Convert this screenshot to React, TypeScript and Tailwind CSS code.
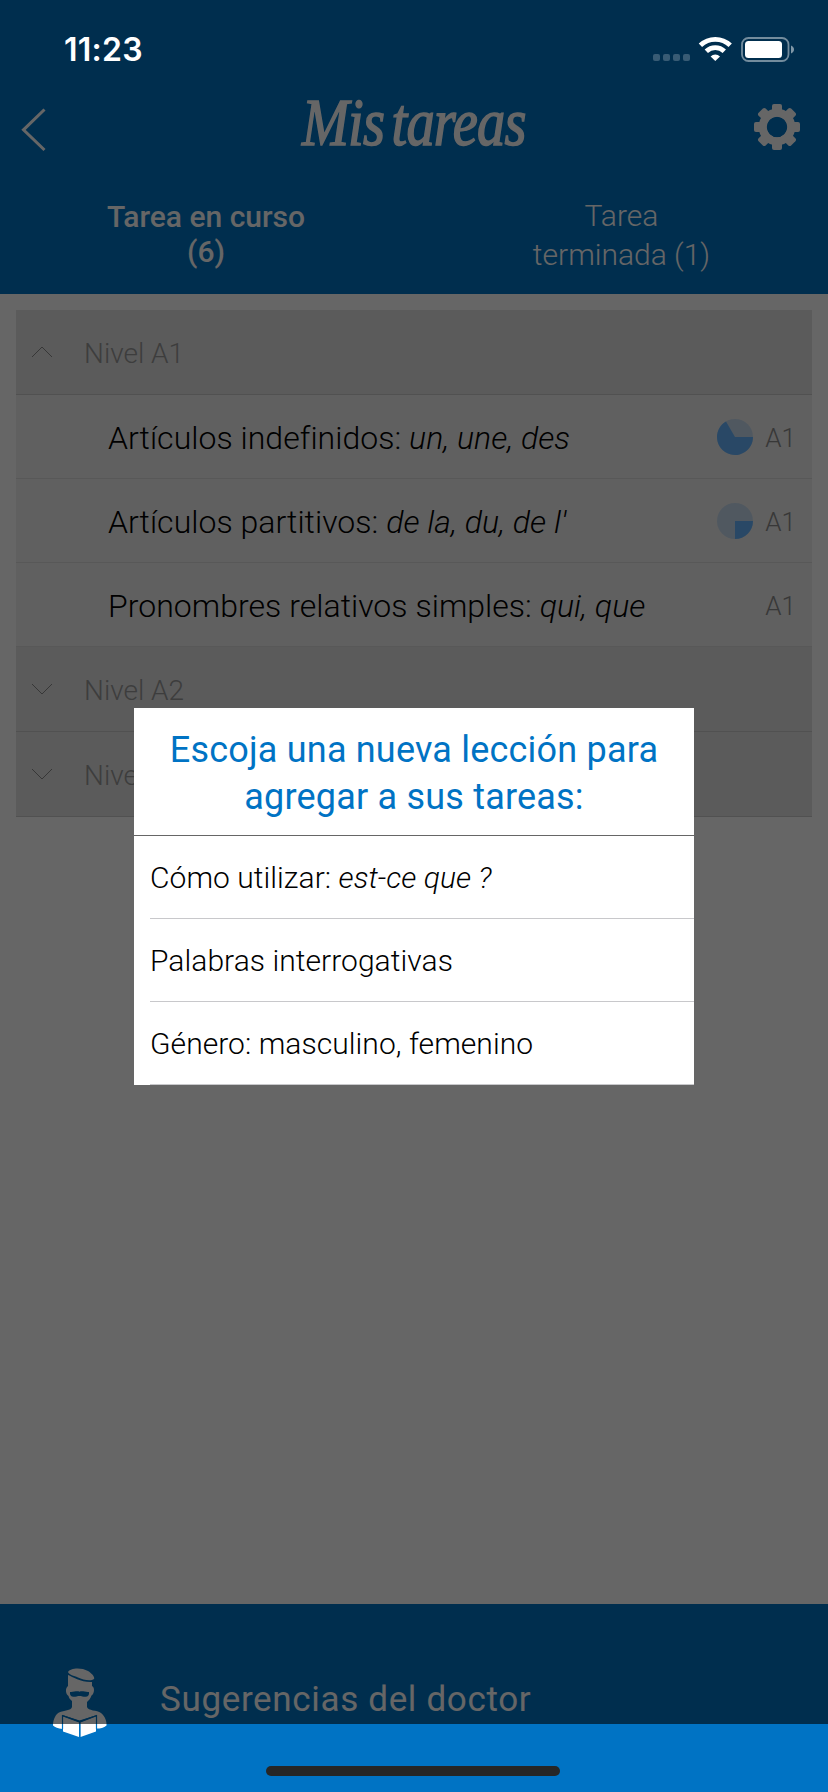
import type { ReactNode } from "react";

function StatusBar() {
  return (
    <div className="relative z-20 flex h-[88px] items-start justify-between pl-[64px] pr-[34px] pt-[30px] text-white">
      <span className="font-['Inter',sans-serif] text-[32px] font-semibold leading-[40px] tracking-[0.25px]">11:23</span>
      <svg width="142" height="32" viewBox="0 0 142 32" className="mt-[3px]" fill="none">
        <g fill="#fff" fillOpacity="0.22">
          <rect x="1" y="21" width="7" height="7" rx="2" />
          <rect x="11" y="21" width="7" height="7" rx="2" />
          <rect x="21" y="21" width="7" height="7" rx="2" />
          <rect x="31" y="21" width="7" height="7" rx="2" />
        </g>
        <g stroke="#fff" strokeWidth="4.8">
          <path d="M48.4 12.3 A 21.5 21.5 0 0 1 78.2 12.3" />
          <path d="M54.3 18.2 A 13 13 0 0 1 72.3 18.2" />
        </g>
        <path d="M63.3 28 L58.6 23.4 A 6.8 6.8 0 0 1 68 23.4 Z" fill="#fff" />
        <rect x="90" y="5" width="46.5" height="23" rx="6.5" stroke="#fff" strokeOpacity="0.45" strokeWidth="1.8" />
        <rect x="93" y="8" width="37" height="17" rx="3.5" fill="#fff" />
        <path d="M139 12.5 C143 14 143 19 139 20.500 Z" fill="#fff" fillOpacity="0.5" />
      </svg>
    </div>
  );
}

function Gear() {
  return (
    <svg width="48" height="48" viewBox="-24 -24 48 48" fill="#fff">
      {[0, 45, 90, 135].map((a) => (
        <rect key={a} x="-5" y="-23" width="10" height="46" rx="2" transform={`rotate(${a})`} mask="url(#hole)" />
      ))}
      <circle r="14.300" fill="none" stroke="#fff" strokeWidth="8" />
      <mask id="hole" maskUnits="userSpaceOnUse" x="-24" y="-24" width="48" height="48">
        <rect x="-24" y="-24" width="48" height="48" fill="#fff" />
        <circle r="10.500" fill="#000" />
      </mask>
    </svg>
  );
}

function Chevron({ up }: { up?: boolean }) {
  return (
    <svg width="22" height="12" viewBox="0 0 22 12" fill="none" stroke="#8a8a8a" strokeWidth="1">
      <path d={up ? "M1 11 L11 1 L21 11" : "M1 1 L11 11 L21 1"} />
    </svg>
  );
}

function LevelHeader({ label, up }: { label: string; up?: boolean }) {
  return (
    <div className="flex h-[85px] items-center border-b border-[#cbcbcb] bg-[#e4e4e4] pl-[15px]">
      <Chevron up={up} />
      <span className="ml-[31px] pt-[3px] text-[28px] font-light leading-[34px] text-[#999]">{label}</span>
    </div>
  );
}

function Lesson({ children, pie }: { children: ReactNode; pie?: string }) {
  return (
    <div className="flex h-[84px] items-center border-b border-[#dcdcdc] bg-[#f0f0f0] pl-[92px] pr-[16px]">
      <span className="flex-1 pt-[2px] text-[32px] font-light leading-[38px] tracking-[0.03px] text-black">{children}</span>
      {pie && (
        <svg width="36" height="36" viewBox="-18 -18 36 36">
          <circle r="18" fill="#c8dcf0" />
          <path d={pie} fill="#66b5ff" />
        </svg>
      )}
      <span className="ml-[12px] pt-[2px] text-[26px] font-light leading-[30px] text-[#8c8c8c]">A1</span>
    </div>
  );
}

function Doctor() {
  return (
    <svg width="56" height="70" viewBox="0 0 56 70" fill="#fff">
      <path d="M16 4 C18 0 29 -1 36 3 C40 5.500 43 9 42 11 C39 13.500 31 12 26 9.500 C22 7.500 17 7 16 4 Z" />
      <path d="M16 7 C21 9 29 14.500 40 14 L40 18 C43 19 42.500 26 39.500 27.500 C38.500 31 36 33 35 34 L35 39 C36 43 45 42 49 45 C53 48 55 54 54.500 57.500 C52 60 48 60.500 45 60.500 L45 47 L27.500 52.500 L10.500 47 L10.500 61 C6 60.500 3 59.500 1 57.500 C1 51 4 46 7 44.500 C12 42 19 43 20 39 L20 33 C18 31.500 17 30 16.500 28 C13.500 26 13 20 16 18 Z" />
      <path d="M11 48.500 L27 54.500 L27 69 L11 63.500 Z M44 48.500 L28.500 54.500 L28.500 69 L44 63.500 Z" />
      <path d="M10.500 61 L10.500 47.500 L27.700 53.500 L44.500 47.500 L44.500 61 M27.700 53.500 L27.700 69" fill="none" stroke="#0073c4" strokeWidth="1.200" />
      <path d="M18 24 C21 24.500 25 22.500 27.500 23.800 C30 22.500 34 24.500 37 24 C37.500 27 36 28.800 33.500 28.800 C31 28.800 29.500 28 27.500 28 C25.500 28 24 28.800 21.500 28.800 C19 28.800 17.500 27 18 24 Z" fill="#0073c4" />
    </svg>
  );
}

function Option({ children }: { children: ReactNode }) {
  return (
    <div className="pl-4">
      <div className="flex h-[83px] items-center border-b border-[#c8c8cb] pt-[2px] text-[30px] font-light leading-[36px] tracking-[0.05px] text-black">
        <span>{children}</span>
      </div>
    </div>
  );
}

export default function App() {
  return (
    <div className="relative flex h-[1792px] w-[828px] flex-col overflow-hidden bg-white font-['Roboto',sans-serif]">
      <header className="h-[294px] bg-[#0073c4] text-white">
        <StatusBar />
        <div className="flex h-[90px] items-start pl-[21px] pr-[27px]">
          <div className="w-[54px] pt-[20px]">
            <svg width="25" height="44" viewBox="0 0 25 44" fill="none" stroke="#fff" strokeWidth="3">
              <path d="M23.500 1.500 L2.500 21.800 L23.500 42" />
            </svg>
          </div>
          <div className="flex flex-1 justify-center">
            <h1 className="origin-center scale-x-[0.83] whitespace-nowrap font-['Liberation_Serif',serif] text-[68px] font-normal italic leading-[68px] tracking-[-1px] [word-spacing:-7px] [-webkit-text-stroke:1.5px_#fff]">
              Mis tareas
            </h1>
          </div>
          <div className="pt-[15px]">
            <Gear />
          </div>
        </div>
        <div className="flex text-center text-[30px]">
          <div className="w-[412px] pt-[21px] font-medium leading-[35px]">
            Tarea en curso
            <br />
            (6)
          </div>
          <div className="w-[416px] pl-[3px] pt-[18px] font-light leading-[39px]">
            Tarea
            <br />
            terminada (1)
          </div>
        </div>
      </header>

      <main className="flex-1 px-4 pt-4">
        <LevelHeader label="Nivel A1" up />
        <Lesson pie="M0 0 L18 0 A18 18 0 1 1 -9 -15.600 Z">
          Artículos indefinidos: <em>un, une, des</em>
        </Lesson>
        <Lesson pie="M0 0 L18 0 A18 18 0 0 1 0 18 Z">
          Artículos partitivos: <em>de la, du, de l'</em>
        </Lesson>
        <Lesson>
          Pronombres relativos simples: <em>qui, que</em>
        </Lesson>
        <LevelHeader label="Nivel A2" />
        <LevelHeader label="Nive" />
      </main>

      <footer className="flex h-[188px] items-start bg-[#0073c4] pl-[52px] text-white">
        <div className="mt-[64px]">
          <Doctor />
        </div>
        <span className="ml-[52px] mt-[75px] text-[35px] leading-[42px] tracking-[0.66px]">Sugerencias del doctor</span>
      </footer>

      <div className="absolute inset-x-0 top-0 z-10 h-[1724px] bg-black/60" />
      <div className="absolute inset-0 z-20 flex items-center justify-center">
        <section className="h-[377px] w-[560px] bg-white">
          <h2 className="h-[128px] border-b border-[#666] pt-[19px] text-center text-[36px] font-normal leading-[47px] tracking-[0.2px] text-[#0073c4]">
            Escoja una nueva lección para
            <br />
            agregar a sus tareas:
          </h2>
          <Option>
            Cómo utilizar: <em>est-ce que ?</em>
          </Option>
          <Option>Palabras interrogativas</Option>
          <Option>Género: masculino, femenino</Option>
        </section>
      </div>
      <div className="absolute bottom-4 left-[266px] z-20 h-[10px] w-[294px] rounded-full bg-[#262626]" />
    </div>
  );
}
